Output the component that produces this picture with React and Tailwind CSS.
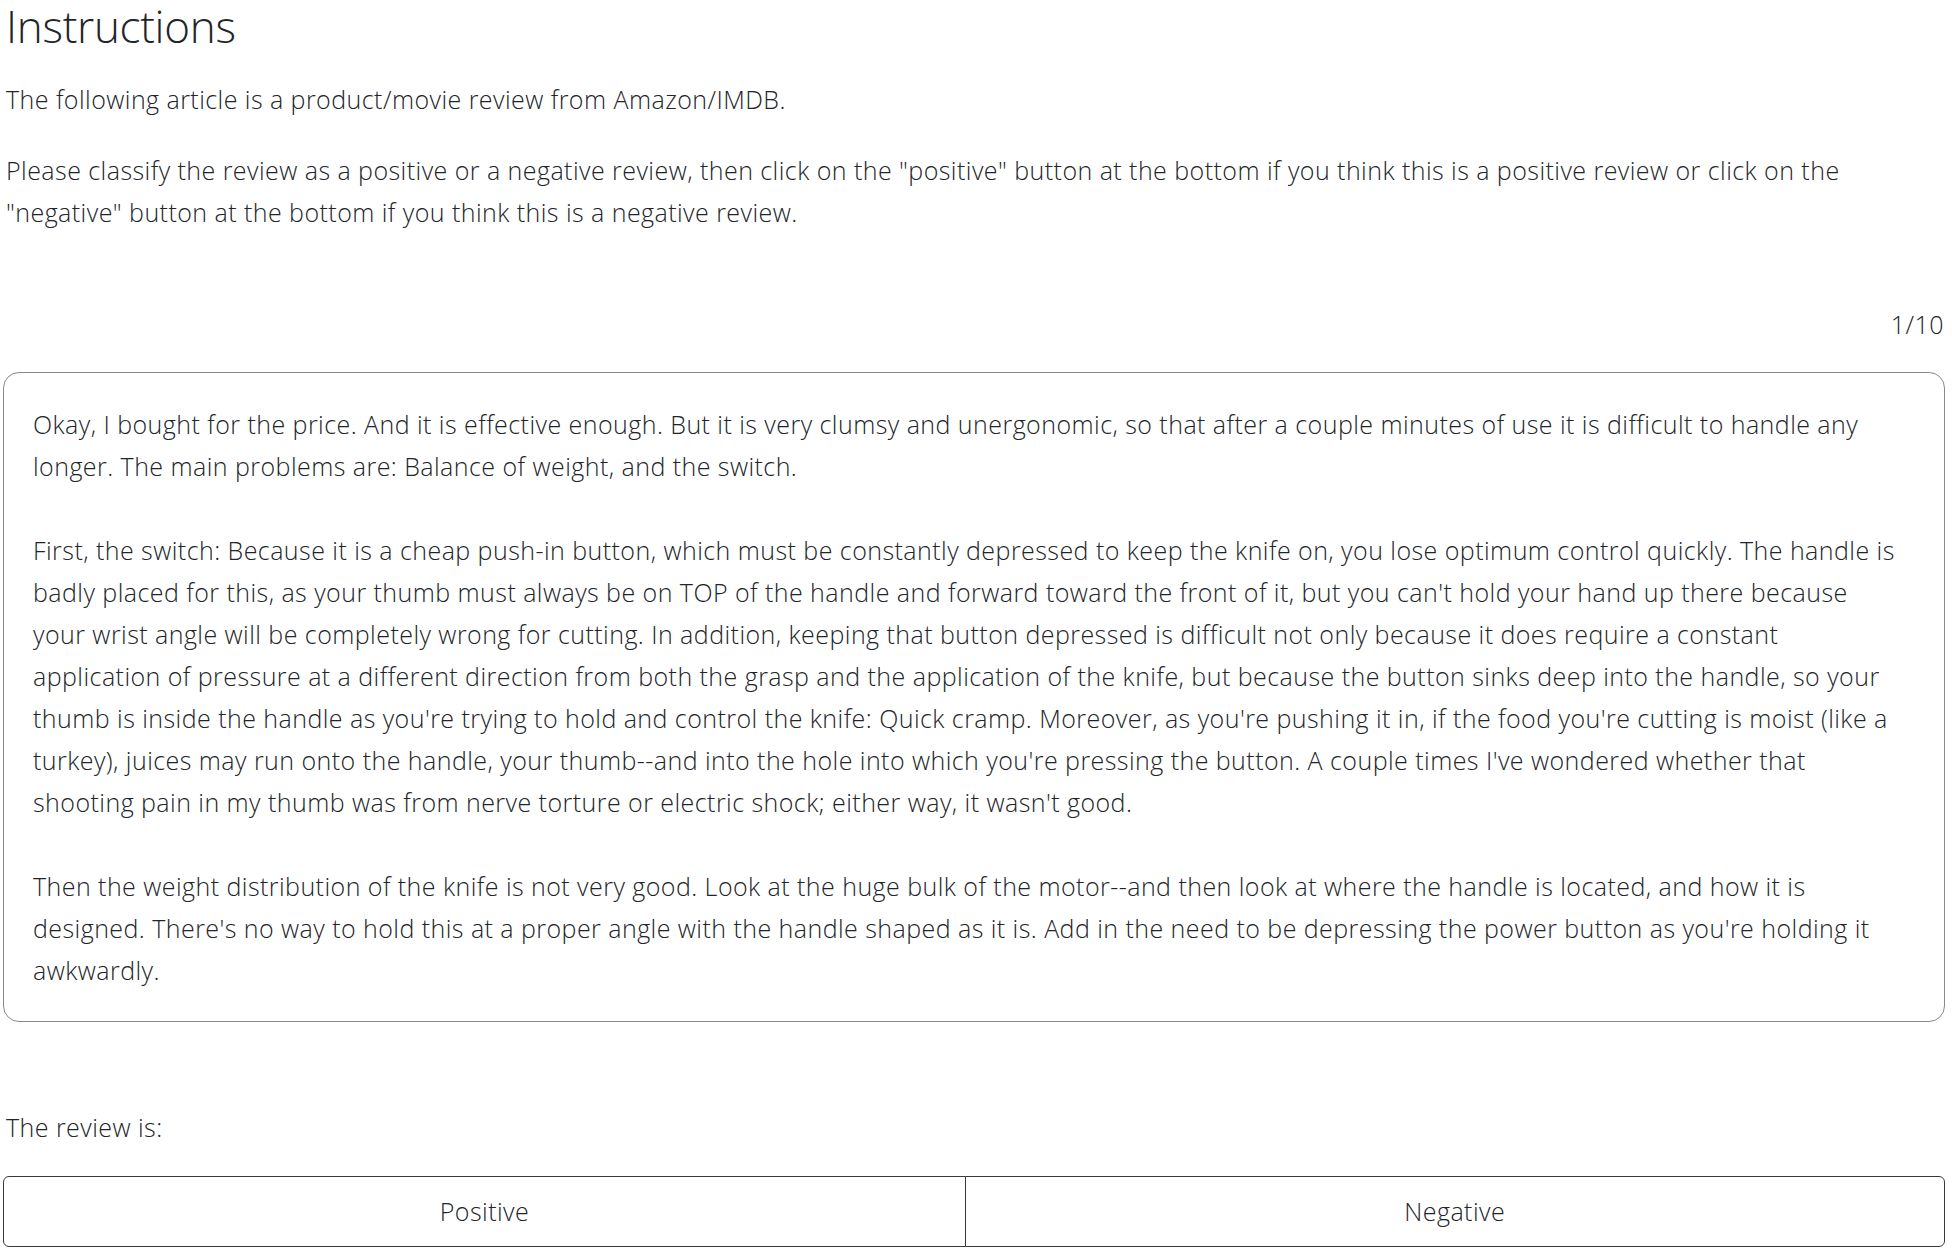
const para2 = [
  "First, the switch: Because it is a cheap push-in button, which must be constantly depressed to keep the knife on, you lose optimum control quickly. The handle is",
  "badly placed for this, as your thumb must always be on TOP of the handle and forward toward the front of it, but you can't hold your hand up there because",
  "your wrist angle will be completely wrong for cutting. In addition, keeping that button depressed is difficult not only because it does require a constant",
  "application of pressure at a different direction from both the grasp and the application of the knife, but because the button sinks deep into the handle, so your",
  "thumb is inside the handle as you're trying to hold and control the knife: Quick cramp. Moreover, as you're pushing it in, if the food you're cutting is moist (like a",
  "turkey), juices may run onto the handle, your thumb--and into the hole into which you're pressing the button. A couple times I've wondered whether that",
  "shooting pain in my thumb was from nerve torture or electric shock; either way, it wasn't good.",
];

const para1 = [
  "Okay, I bought for the price. And it is effective enough. But it is very clumsy and unergonomic, so that after a couple minutes of use it is difficult to handle any",
  "longer. The main problems are: Balance of weight, and the switch.",
];

const para3 = [
  "Then the weight distribution of the knife is not very good. Look at the huge bulk of the motor--and then look at where the handle is located, and how it is",
  "designed. There's no way to hold this at a proper angle with the handle shaped as it is. Add in the need to be depressing the power button as you're holding it",
  "awkwardly.",
];

function Lines({ lines }) {
  return lines.map((l, i) => (
    <span key={i} className="block">
      {l}
    </span>
  ));
}

export default function App() {
  return (
    <div className="min-h-[1252px] bg-white pl-[3px] pr-[7px] font-['Open_Sans',sans-serif] font-light text-[#212529]">
      <h1 className="pl-[3px] text-[44px] leading-[52px] font-light tracking-[-0.3px]">Instructions</h1>
      <p className="mt-[26px] pl-[3px] text-[25px] leading-[42px] tracking-[0.45px]">
        The following article is a product/movie review from Amazon/IMDB.
      </p>
      <p className="mt-[29px] pl-[3px] text-[25px] leading-[42px] tracking-[0.45px] whitespace-nowrap">
        <span className="block">
          Please classify the review as a positive or a negative review, then click on the "positive" button at the bottom if you think this is a positive review or click on the
        </span>
        <span className="block">"negative" button at the bottom if you think this is a negative review.</span>
      </p>
      <div className="mt-[70px] flex justify-end pr-[1px] text-[25px] leading-[42px] tracking-[0.45px]">1/10</div>
      <div className="mt-[27px] rounded-2xl border border-[#8a8a8a] px-[29px] pt-[30px] pb-[30px] text-[25px] leading-[42px] tracking-[0.45px] whitespace-nowrap">
        <div>
          <Lines lines={para1} />
        </div>
        <div className="mt-[42px]">
          <Lines lines={para2} />
        </div>
        <div className="mt-[42px]">
          <Lines lines={para3} />
        </div>
      </div>
      <div className="mt-[84px] pl-[3px] text-[25px] leading-[42px] tracking-[0.45px]">The review is:</div>
      <div className="mt-[28px] flex h-[71px] text-[25px] tracking-[0.45px]">
        <button className="flex w-[963px] items-center justify-center rounded-l-md border-[1.5px] border-[#343a40] bg-white font-light text-[#212529]">
          Positive
        </button>
        <button className="-ml-[1.5px] flex flex-1 items-center justify-center rounded-r-md border-[1.5px] border-[#343a40] bg-white font-light text-[#212529]">
          Negative
        </button>
      </div>
    </div>
  );
}
